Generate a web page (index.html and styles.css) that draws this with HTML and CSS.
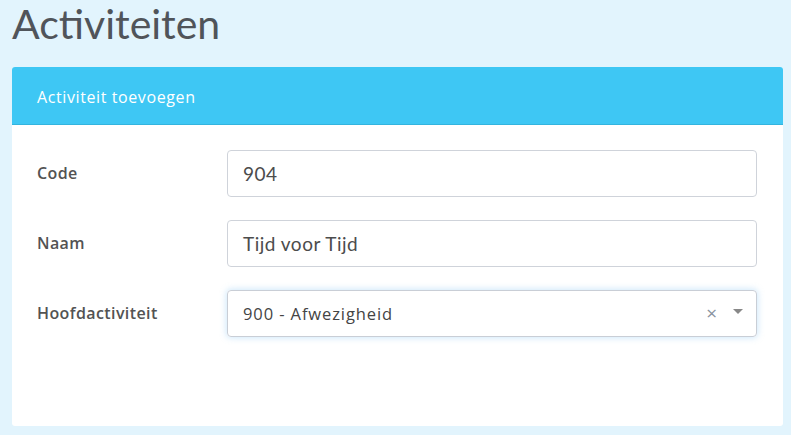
FILE: index.html
```html
<!DOCTYPE html>
<html>
<head>
<meta charset="utf-8">
<link rel="stylesheet" href="styles.css">
</head>
<body>
<h1 class="title">Activiteiten</h1>
<div class="card">
  <div class="card-header">Activiteit toevoegen</div>
  <div class="card-body">
    <div class="row">
      <label class="label">Code</label>
      <div class="input">904</div>
    </div>
    <div class="row">
      <label class="label">Naam</label>
      <div class="input">Tijd voor Tijd</div>
    </div>
    <div class="row">
      <label class="label">Hoofdactiviteit</label>
      <div class="input select">
        <span class="select-value">900 - Afwezigheid</span>
        <span class="clear">×</span>
        <span class="caret"></span>
      </div>
    </div>
  </div>
</div>
</body>
</html>
```
FILE: styles.css
```css
* { box-sizing: border-box; }
html, body { margin: 0; padding: 0; }
body {
  background: #e2f4fd;
  font-family: Lato, "Open Sans", sans-serif;
  color: #4a4a4a;
  width: 791px;
  height: 435px;
  overflow: hidden;
  padding: 0 8px 0 12px;
}
.title {
  margin: 0;
  padding-top: 2px;
  height: 67px;
  font-weight: 400;
  font-size: 41px;
  line-height: 44px;
  color: #50545a;
}
.card {
  width: 771px;
  height: 359px;
  background: #fff;
  border-radius: 3px;
  overflow: hidden;
}
.card-header {
  height: 58px;
  background: #3ec7f4;
  border-bottom: 1px solid #33b4de;
  color: #fff;
  font-family: "Open Sans", sans-serif;
  font-size: 16px;
  letter-spacing: 0.6px;
  padding: 0 25px;
  display: flex;
  align-items: center;
  padding-top: 2px;
}
.card-body {
  padding: 25px 26px 0 25px;
  display: flex;
  flex-direction: column;
  gap: 23px;
}
.row {
  display: flex;
  align-items: center;
  height: 47px;
}
.label {
  width: 190px;
  font-family: "Open Sans", sans-serif;
  font-size: 16px;
  font-weight: 600;
  letter-spacing: 0.4px;
  color: #535353;
  padding-bottom: 2px;
}
.input {
  flex: 1;
  height: 47px;
  border: 1px solid #cfd3da;
  border-radius: 4px;
  padding: 0 15px;
  font-size: 19px;
  letter-spacing: 0.5px;
  color: #4c4c4c;
  display: flex;
  align-items: center;
  padding-bottom: 1px;
}
.select {
  font-family: "Open Sans", sans-serif;
  font-size: 16.5px;
  letter-spacing: 0.9px;
  color: #444;
  box-shadow: 0 0 6px 1px rgba(120, 190, 240, 0.35);
  border-color: #c9ced6;
}
.select-value { flex: 1; }
.clear {
  color: #8a93a0;
  font-size: 19px;
  margin-right: 16px;
  line-height: 1;
  letter-spacing: 0;
}
.caret {
  width: 0;
  height: 0;
  border-left: 5px solid transparent;
  border-right: 5px solid transparent;
  border-top: 5px solid #888;
  margin-right: -2px;
  margin-bottom: 3px;
}
```
